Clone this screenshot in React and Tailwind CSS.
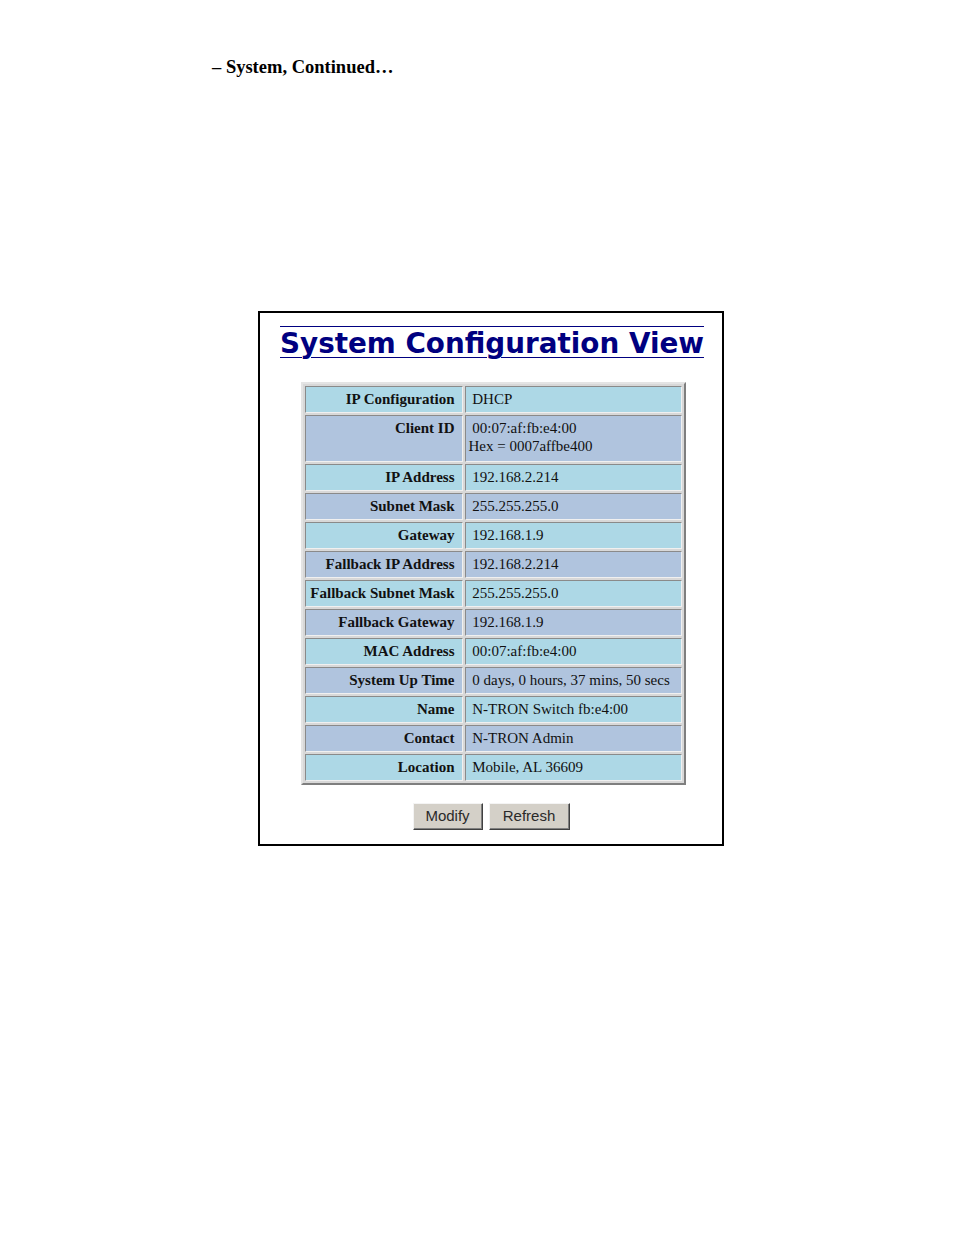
import React from "react";

const rows = [
  ["IP Configuration", ["DHCP"]],
  ["Client ID", ["\u00a000:07:af:fb:e4:00", "Hex = 0007affbe400"]],
  ["IP Address", ["192.168.2.214"]],
  ["Subnet Mask", ["255.255.255.0"]],
  ["Gateway", ["192.168.1.9"]],
  ["Fallback IP Address", ["192.168.2.214"]],
  ["Fallback Subnet Mask", ["255.255.255.0"]],
  ["Fallback Gateway", ["192.168.1.9"]],
  ["MAC Address", ["00:07:af:fb:e4:00"]],
  ["System Up Time", ["0 days, 0 hours, 37 mins, 50 secs"]],
  ["Name", ["N-TRON Switch fb:e4:00"]],
  ["Contact", ["N-TRON Admin"]],
  ["Location", ["Mobile, AL 36609"]],
];

export default function App() {
  return (
    <div className="bg-white w-[954px] h-[1235px] relative" style={{ fontFamily: '"Liberation Serif", "Times New Roman", serif' }}>
      <div className="pt-[56px] pl-[212px] text-[18.5px] font-bold leading-[22px] text-black">
        – System, Continued…
      </div>
      <div className="ml-[258px] mt-[233px] w-[466px] h-[535px] border-2 border-black flex flex-col items-center">
        <div className="mt-[13px] ml-[2px] w-[424px] border-t border-[#000080]">
          <h1
            className="text-[27.8px] font-bold text-[#000080] underline decoration-1 underline-offset-[4px] leading-[32px] pt-[1px] whitespace-nowrap"
            style={{ fontFamily: '"DejaVu Sans", Verdana, sans-serif' }}
          >
            System Configuration View
          </h1>
        </div>
        <table className="mt-[22px] ml-[4px] border-separate border-spacing-[2px] border-2 border-t-[#e4e4e4] border-l-[#e4e4e4] border-r-[#7f7f7f] border-b-[#7f7f7f] bg-[#d8d8d8] text-[15px] leading-[18px] text-[#111]">
          <tbody>
            {rows.map(([label, vals], i) => {
              const bg = i % 2 === 0 ? "bg-[#add8e6]" : "bg-[#b0c4de]";
              const pb = vals.length > 1 ? "pb-[6px]" : "pb-[4px]";
              return (
                <tr key={label}>
                  <td className={`${bg} ${pb} w-[158px] align-top text-right font-bold pr-[7px] pl-[4px] pt-[3px] border border-t-[#8a8a8a] border-l-[#8a8a8a] border-r-[#f0f0f0] border-b-[#f0f0f0] whitespace-nowrap`}>
                    {label}
                  </td>
                  <td className={`${bg} ${pb} w-[217px] align-top text-left pl-[3px] pr-[4px] pt-[3px] border border-t-[#8a8a8a] border-l-[#8a8a8a] border-r-[#f0f0f0] border-b-[#f0f0f0] whitespace-nowrap`}>
                    {vals.map((v, j) => (
                      <div key={j}>{j === 0 && vals.length === 1 ? "\u00a0" + v : v}</div>
                    ))}
                  </td>
                </tr>
              );
            })}
          </tbody>
        </table>
        <div className="mt-[18px] flex gap-[6px]" style={{ fontFamily: '"Liberation Sans", Arial, sans-serif' }}>
          <button className="w-[70px] h-[27px] bg-[#d4d0c8] text-[15px] text-[#2a2a2a] border border-t-[#f4f4f4] border-l-[#f4f4f4] border-r-[#404040] border-b-[#404040] shadow-[inset_-1px_-1px_0_#808080]">
            Modify
          </button>
          <button className="w-[81px] h-[27px] bg-[#d4d0c8] text-[15px] text-[#2a2a2a] border border-t-[#f4f4f4] border-l-[#f4f4f4] border-r-[#404040] border-b-[#404040] shadow-[inset_-1px_-1px_0_#808080]">
            Refresh
          </button>
        </div>
      </div>
    </div>
  );
}
